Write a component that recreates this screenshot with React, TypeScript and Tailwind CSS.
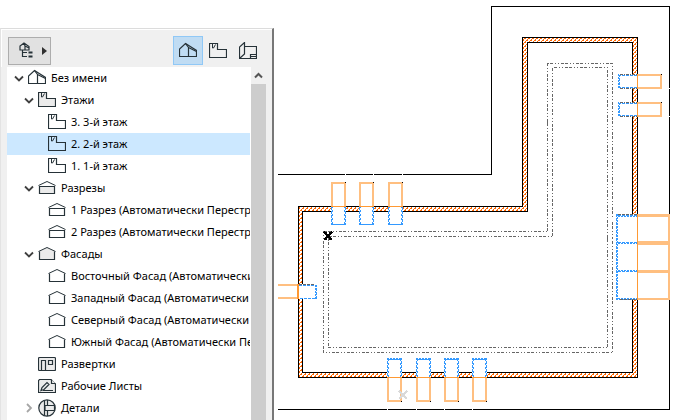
import type { ReactNode } from "react";

type IconName = "home" | "story" | "section" | "elevation" | "interior" | "worksheet" | "detail";

type Item = {
  label: string;
  level: 0 | 1 | 2;
  icon: IconName;
  open?: boolean;
  filled?: boolean;
  selected?: boolean;
};

const items: Item[] = [
  { label: "Без имени", level: 0, icon: "home", open: true },
  { label: "Этажи", level: 1, icon: "story", open: true, filled: true },
  { label: "3. 3-й этаж", level: 2, icon: "story" },
  { label: "2. 2-й этаж", level: 2, icon: "story", selected: true },
  { label: "1. 1-й этаж", level: 2, icon: "story" },
  { label: "Разрезы", level: 1, icon: "section", open: true, filled: true },
  { label: "1 Разрез (Автоматически Перестр", level: 2, icon: "section" },
  { label: "2 Разрез (Автоматически Перестр", level: 2, icon: "section" },
  { label: "Фасады", level: 1, icon: "elevation", open: true, filled: true },
  { label: "Восточный Фасад (Автоматически", level: 2, icon: "elevation" },
  { label: "Западный Фасад (Автоматически П", level: 2, icon: "elevation" },
  { label: "Северный Фасад (Автоматически", level: 2, icon: "elevation" },
  { label: "Южный Фасад (Автоматически Пе", level: 2, icon: "elevation" },
  { label: "Развертки", level: 1, icon: "interior", filled: true },
  { label: "Рабочие Листы", level: 1, icon: "worksheet", filled: true },
  { label: "Детали", level: 1, icon: "detail", open: false, filled: true },
];

const indents = ["pl-[7px]", "pl-[17px]", "pl-[27px]"];

const shapes: Record<IconName, ReactNode> = {
  home: (
    <>
      <path d="M.5 14.5V7L6.5 1.5 17.5 8.5V14.5Z" />
      <path d="M9.5 14.5V5.5L6.5 1.5M9.5 5.5L17.5 9.5" />
    </>
  ),
  story: (
    <>
      <path d="M.5 1.5H8.5V7.5H17.5V15.5H.5Z" />
      <path d="M3.5 2V6L4.5 6L6.5 2.5" fill="none" strokeWidth="1" />
    </>
  ),
  section: (
    <>
      <path d="M1.5 7.5H16.5V14.5H1.5Z" />
      <path d="M.5 6.5L9 2.5L17.5 6.5" fill="none" strokeWidth="1" />
    </>
  ),
  elevation: (
    <>
      <path d="M1.5 6V14.5H16.5V6L9 2.5Z" stroke="none" />
      <path d="M1.5 6.5V14.5H16.5V6.5" />
      <path d="M.5 6.5L9 2.5L17.5 6.5" fill="none" strokeWidth="1" />
    </>
  ),
  interior: (
    <>
      <rect x=".5" y="2.5" width="17" height="13" rx="1" />
      <path d="M3.5 15V5.5H7.5V15M10.5 5.5H14.5V9.5H10.5Z" />
    </>
  ),
  worksheet: (
    <>
      <path d="M1.5 2.5H13L17.5 7V15.5H.5V3.5Z" />
      <path d="M13.5 2.5V6.5H17.5M3 13.5L4 10.5 9 5.5 11 7.5 6 12.5ZM5 13.5H15" />
    </>
  ),
  detail: (
    <>
      <circle cx="9" cy="9" r="8.2" />
      <path d="M6.5 1.5V16.5M9.5 1V6.5M9.5 11.5V17M7 6.5H16.5V11.5H7Z" />
    </>
  ),
};

function TreeIcon({ name, fill = "none" }: { name: IconName; fill?: string }) {
  return (
    <svg className="shrink-0" width="18" height="18" viewBox="0 0 18 18" fill={fill} stroke="#263238" strokeWidth="1.2" aria-hidden="true">
      {shapes[name]}
    </svg>
  );
}

function Chevron({ open }: { open: boolean }) {
  return (
    <svg width="10" height="10" viewBox="0 0 10 10" fill="none" stroke={open ? "#404040" : "#a6a6a6"} strokeWidth="1.8" aria-hidden="true">
      {open ? <path d="M1 3.5L5 7.5L9 3.5" /> : <path d="M3 1L7 5L3 9" />}
    </svg>
  );
}

function TreeRow({ item }: { item: Item }) {
  return (
    <li
      role="treeitem"
      aria-level={item.level + 1}
      aria-expanded={item.open}
      aria-selected={!!item.selected}
      className={`flex h-[22px] items-center ${indents[item.level]} ${item.selected ? "bg-[#cce8ff]" : ""}`}
    >
      {item.open === undefined ? (
        <span className="w-[14px] shrink-0" />
      ) : (
        <button type="button" aria-label={`${item.open ? "Свернуть" : "Развернуть"} ${item.label}`} className="w-[14px] shrink-0">
          <Chevron open={item.open} />
        </button>
      )}
      <TreeIcon name={item.icon} fill={item.filled ? "#ebebeb" : "none"} />
      <span className="ml-[5px] whitespace-nowrap text-black">{item.label}</span>
    </li>
  );
}

function Navigator() {
  return (
    <aside className="mt-7 flex w-[274px] shrink-0 flex-col border-t border-l border-r-2 border-t-[#dcdcdc] border-r-[#777777] border-l-[#e3e3e3] bg-[#f0f0f0]">
      <div className="flex h-[38px] shrink-0 items-center border-t border-l border-white pr-[9px] pl-[6px]">
        <button type="button" aria-label="Карта проекта" className="mt-1 flex h-7 w-[43px] items-center justify-between border border-[#adadad] bg-[#e1e1e1] pr-[3px] pl-[10px]">
          <svg width="15" height="18" viewBox="0 0 15 18" fill="none" stroke="#263238" strokeWidth="1.2" aria-hidden="true">
            <path d="M1 8V4L5 1L10 4.5V8ZM5 1L6 4V8M6 4L10 6M3.5 8V14.5H8M3.5 10.5H8" />
            <path d="M9.5 10.5H13.5M9.5 14.5H13.5" strokeWidth="2" />
          </svg>
          <svg width="5" height="8" viewBox="0 0 5 8" fill="#303030" aria-hidden="true">
            <path d="M0 0L5 4L0 8Z" />
          </svg>
        </button>
        <div className="mt-1 ml-auto flex items-center">
          <button type="button" aria-label="Карта проекта" aria-pressed="true" className="flex h-[29px] w-[30px] items-center justify-center border border-[#90c8f6] bg-[#c0dcf3]">
            <TreeIcon name="home" />
          </button>
          <button type="button" aria-label="Карта видов" className="flex h-[29px] w-[30px] items-center justify-center">
            <TreeIcon name="story" />
          </button>
          <button type="button" aria-label="Книга макетов" className="flex h-[29px] w-[30px] items-center justify-center">
            <svg width="18" height="18" viewBox="0 0 18 18" fill="none" stroke="#263238" strokeWidth="1.2" aria-hidden="true">
              <path d="M5.5 4.5H17.5V16.5H.5V5L5.5 .5V12L.5 16.5M11.5 16.5V12.5H17.5M11.5 14.5H17.5" />
            </svg>
          </button>
        </div>
      </div>
      <div className="flex min-h-0 flex-1 pr-[6px] pl-[6px]">
        <ul role="tree" aria-label="Карта проекта" className="min-w-0 flex-1 overflow-hidden bg-white">
          {items.map((item) => (
            <TreeRow key={item.label} item={item} />
          ))}
        </ul>
        <div className="flex w-[16px] shrink-0 flex-col border-l border-white bg-[#cdcdcd]">
          <button type="button" aria-label="Прокрутить вверх" className="flex h-[17px] items-center justify-center bg-[#f0f0f0]">
            <svg width="9" height="7" viewBox="0 0 9 7" fill="none" stroke="#555555" strokeWidth="2" aria-hidden="true">
              <path d="M1 5.5L4.5 2L8 5.5" />
            </svg>
          </button>
        </div>
      </div>
    </aside>
  );
}

const wallOuter = "M298.5 206.5H522.5V37.5H637.5V377.5H298.5Z";
const wallInner = "M302.5 211.5V372.5H632.5V42.5H527.5V211.5Z";

function VerticalOpening({ x, top }: { x: number; top: boolean }) {
  const wallY = top ? 206 : 377;
  const farY = top ? 182 : 402;
  const nearY = top ? 225 : 358;
  return (
    <g fill="none">
      <rect x={x} y={Math.min(farY, nearY)} width="15" height={Math.abs(farY - nearY)} fill="white" />
      <path d={`M${x + 1} ${wallY}V${top ? farY + 1 : farY - 1}H${x + 14}V${wallY}`} stroke="#ffbf80" strokeWidth="2" />
      <path d={`M${x + 0.5} ${wallY}V${nearY}M${x + 14.5} ${wallY}V${nearY}`} stroke="#3399ff" />
      <path d={`M${x + 1.5} ${wallY}V${nearY}M${x + 13.5} ${wallY}V${nearY}`} stroke="#3399ff" strokeDasharray="2 2" />
      <path d={`M${x + 0.5} ${wallY}V${nearY}M${x + 14.5} ${wallY}V${nearY}`} stroke="#ffffff" strokeDasharray="1 3" />
      <path d={`M${x} ${top ? nearY - 0.5 : nearY + 1.5}H${x + 15}`} stroke="#3399ff" />
      {!top && <path d={`M${x} ${nearY + 0.5}H${x + 15}`} stroke="#3399ff" strokeDasharray="2 1" />}
      <path d={`M${x} ${wallY + 0.5}H${x + 15}`} stroke="#ff9933" />
      <rect x={x + 14} y={top ? farY : farY - 1} width="1" height="1" fill="black" />
      <rect x={top ? x + 14 : x} y={top ? 174 : 409} width="1" height="1" fill="white" />
    </g>
  );
}

function SideOpening({ y }: { y: number }) {
  return (
    <g fill="none">
      <rect x="618" y={y} width="44" height="15" fill="white" />
      <path d={`M637 ${y + 1}H661V${y + 14}H637`} stroke="#ffbf80" strokeWidth="2" />
      <path d={`M637 ${y + 1.5}H619.5V${y + 13.5}H637`} stroke="#3399ff" strokeDasharray="3 1" />
      <path d={`M618.5 ${y}V${y + 15}`} stroke="#3399ff" strokeDasharray="2 1" />
      <path d={`M620 ${y + 0.5}H637M620 ${y + 14.5}H637`} stroke="#666666" strokeDasharray="3 1 1 1" />
      <path d={`M637.5 ${y}V${y + 15}`} stroke="#ff9933" />
      <rect x="661" y={y} width="1" height="1" fill="black" />
      <rect x="669" y={y + 14} width="1" height="1" fill="white" />
    </g>
  );
}

function FloorPlan() {
  return (
    <svg className="w-full" viewBox="274 0 401 420" preserveAspectRatio="xMinYMin meet" shapeRendering="crispEdges" role="img" aria-label="План этажа">
      <defs>
        <pattern id="hatch" width="4" height="4" patternUnits="userSpaceOnUse">
          <rect width="4" height="4" fill="white" />
          <path d="M2 0H4V1H2ZM1 1H2V2H1ZM0 2H2V3H0ZM3 3H4V4H3Z" fill="#ff6600" />
        </pattern>
      </defs>
      <path d="M278 174.5H491.5V6.5H669.5V409.5H278" fill="none" stroke="black" />
      <path d={`${wallOuter}${wallInner}`} fill="url(#hatch)" fillRule="evenodd" stroke="black" />
      <g fill="none" stroke="#666666" strokeDasharray="3 1 3 2 1 2 1 2">
        <path d="M323.5 231.5H547.5V63.5H612.5V352.5H323.5Z" />
        <path d="M328.5 236.5H552.5V67.5H607.5V347.5H328.5Z" />
      </g>
      {[331, 359, 388].map((x) => (
        <VerticalOpening key={x} x={x} top />
      ))}
      {[387, 416, 444, 472].map((x) => (
        <VerticalOpening key={x} x={x} top={false} />
      ))}
      {[74, 102].map((y) => (
        <SideOpening key={y} y={y} />
      ))}
      <g fill="none">
        <rect x="616" y="214" width="54" height="86" fill="white" />
        <path d="M637 215.5H670M637 271.5H670" stroke="#ffbf80" strokeWidth="3" />
        <path d="M637 243H670" stroke="#ffbf80" strokeWidth="4" />
        <path d="M637 299H669V214" stroke="#ffbf80" strokeWidth="2" />
        <path d="M616.5 214V299.5H637M618 215.5H637M618 242.5H637M618 271.5H637" stroke="#3399ff" strokeDasharray="3 1" />
        <path d="M617.5 214V299M618 216.5H637M618 243.5H637M618 270.5H637M618 298.5H637" stroke="#3399ff" strokeDasharray="2 1" />
        <path d="M618 214.5H637M620 299.5H637" stroke="#666666" strokeDasharray="3 1" />
        <path d="M637.5 214V300" stroke="#ff9933" />
      </g>
      <g fill="none">
        <rect x="278" y="284" width="39" height="15" fill="white" />
        <path d="M278 285H298M278 298H298" stroke="#ffbf80" strokeWidth="2" />
        <path d="M299 285.5H316.5V298.5H299" stroke="#3399ff" strokeDasharray="3 1" />
        <path d="M315.5 285V299" stroke="#3399ff" strokeDasharray="2 1" />
        <path d="M299 284.5H315" stroke="#666666" strokeDasharray="3 1" />
        <path d="M298 284V299" stroke="#ff9933" strokeWidth="2" />
      </g>
      <path d="M324 232L332 240M332 232L324 240" stroke="black" strokeWidth="2" />
      <path d="M324 232.5H327M329 232.5H332M324 239.5H327M329 239.5H332" stroke="black" />
      <path d="M399 391L407 399M407 391L399 399" stroke="#d9d9d9" strokeWidth="2" />
    </svg>
  );
}

export default function App() {
  return (
    <div className="flex h-screen overflow-hidden bg-white font-['Noto_Sans','Open_Sans',sans-serif] text-[11px]">
      <Navigator />
      <main className="min-w-0 flex-1">
        <FloorPlan />
      </main>
    </div>
  );
}
